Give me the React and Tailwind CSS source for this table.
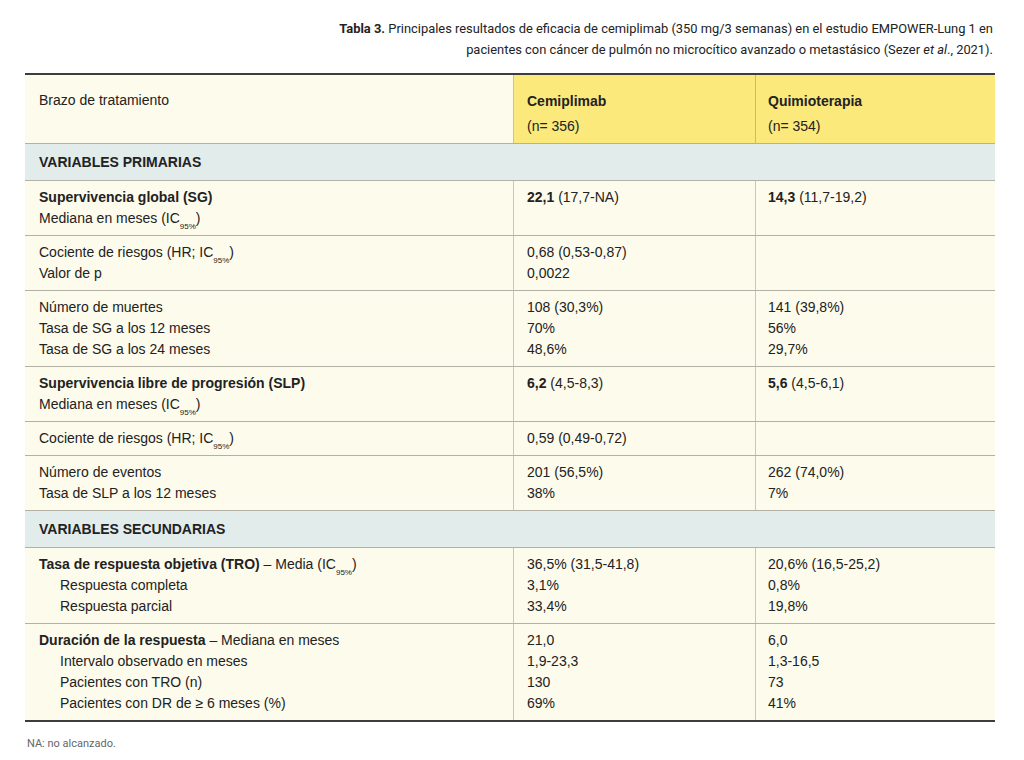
import React from "react";

const Sub = () => <sub className="text-[8px] leading-none align-[-4px]">95%</sub>;

function Row({ c1, c2, c3 }) {
  return (
    <div className="grid grid-cols-[489px_242px_239px] border-b border-[#b3b0a6] bg-[#fdfbec]">
      <div className="pl-[14px] pt-[6px] pb-[6px] border-r border-[#c9c6bb]">{c1}</div>
      <div className="pl-[13px] pt-[6px] pb-[6px] border-r border-[#c9c6bb]">{c2}</div>
      <div className="pl-[12px] pt-[6px] pb-[6px]">{c3}</div>
    </div>
  );
}

function Section({ children }) {
  return (
    <div className="bg-[#e2ecea] border-b border-[#b3b0a6] pl-[14px] pt-[8px] pb-[7px] font-bold">
      {children}
    </div>
  );
}

const In = ({ children }) => <div className="pl-[21px]">{children}</div>;

export default function App() {
  return (
    <div className="w-[1024px] h-[760px] bg-white text-[#222] font-['Liberation_Sans',Arial,sans-serif] text-[14px] leading-[21px] relative">
      <div className="pt-[18px] pr-[31px] text-right text-[12.9px] leading-[21px] font-['Roboto',sans-serif] text-[#222]">
        <div>
          <span className="font-bold">Tabla 3.</span> Principales resultados de eficacia de cemiplimab (350 mg/3 semanas) en el estudio EMPOWER-Lung 1 en
        </div>
        <div>
          pacientes con cáncer de pulmón no microcítico avanzado o metastásico (Sezer <i>et al</i>., 2021).
        </div>
      </div>

      <div className="ml-[25px] mt-[13px] w-[970px] border-t-2 border-[#3d3d3d]">
        <div className="grid grid-cols-[489px_242px_239px] border-b border-[#b3b0a6] h-[69px]">
          <div className="bg-[#fdfbec] pl-[14px] pt-[15px] border-r border-[#d8c95a]">Brazo de tratamiento</div>
          <div className="bg-[#fbe97c] pl-[13px] pt-[14px] leading-[25px] border-r border-[#c9bd6a]">
            <div className="font-bold">Cemiplimab</div>
            <div>(n= 356)</div>
          </div>
          <div className="bg-[#fbe97c] pl-[12px] pt-[14px] leading-[25px]">
            <div className="font-bold">Quimioterapia</div>
            <div>(n= 354)</div>
          </div>
        </div>

        <Section>VARIABLES PRIMARIAS</Section>

        <Row
          c1={<><div className="font-bold">Supervivencia global (SG)</div><div>Mediana en meses (IC<Sub />)</div></>}
          c2={<div><b>22,1</b> (17,7-NA)</div>}
          c3={<div><b>14,3</b> (11,7-19,2)</div>}
        />
        <Row
          c1={<><div>Cociente de riesgos (HR; IC<Sub />)</div><div>Valor de p</div></>}
          c2={<><div>0,68 (0,53-0,87)</div><div>0,0022</div></>}
          c3={null}
        />
        <Row
          c1={<><div>Número de muertes</div><div>Tasa de SG a los 12 meses</div><div>Tasa de SG a los 24 meses</div></>}
          c2={<><div>108 (30,3%)</div><div>70%</div><div>48,6%</div></>}
          c3={<><div>141 (39,8%)</div><div>56%</div><div>29,7%</div></>}
        />
        <Row
          c1={<><div className="font-bold">Supervivencia libre de progresión (SLP)</div><div>Mediana en meses (IC<Sub />)</div></>}
          c2={<div><b>6,2</b> (4,5-8,3)</div>}
          c3={<div><b>5,6</b> (4,5-6,1)</div>}
        />
        <Row
          c1={<div>Cociente de riesgos (HR; IC<Sub />)</div>}
          c2={<div>0,59 (0,49-0,72)</div>}
          c3={null}
        />
        <Row
          c1={<><div>Número de eventos</div><div>Tasa de SLP a los 12 meses</div></>}
          c2={<><div>201 (56,5%)</div><div>38%</div></>}
          c3={<><div>262 (74,0%)</div><div>7%</div></>}
        />

        <Section>VARIABLES SECUNDARIAS</Section>

        <Row
          c1={<><div><b>Tasa de respuesta objetiva (TRO)</b> – Media (IC<Sub />)</div><In>Respuesta completa</In><In>Respuesta parcial</In></>}
          c2={<><div>36,5% (31,5-41,8)</div><div>3,1%</div><div>33,4%</div></>}
          c3={<><div>20,6% (16,5-25,2)</div><div>0,8%</div><div>19,8%</div></>}
        />
        <div className="grid grid-cols-[489px_242px_239px] border-b-2 border-[#3d3d3d] bg-[#fdfbec]">
          <div className="pl-[14px] pt-[6px] pb-[6px] border-r border-[#c9c6bb]">
            <div><b>Duración de la respuesta</b> – Mediana en meses</div>
            <In>Intervalo observado en meses</In>
            <In>Pacientes con TRO (n)</In>
            <In>Pacientes con DR de ≥ 6 meses (%)</In>
          </div>
          <div className="pl-[13px] pt-[6px] pb-[6px] border-r border-[#c9c6bb]">
            <div>21,0</div><div>1,9-23,3</div><div>130</div><div>69%</div>
          </div>
          <div className="pl-[12px] pt-[6px] pb-[6px]">
            <div>6,0</div><div>1,3-16,5</div><div>73</div><div>41%</div>
          </div>
        </div>
      </div>

      <div className="ml-[27px] mt-[14px] text-[11px] leading-[16px] text-[#666] font-['Roboto',sans-serif]">
        NA: no alcanzado.
      </div>
    </div>
  );
}
